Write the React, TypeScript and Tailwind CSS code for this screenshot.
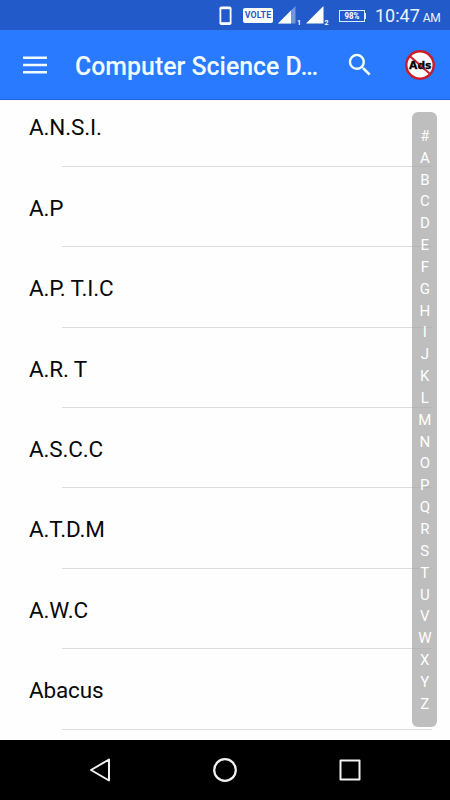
const terms = ['A.N.S.I.', 'A.P', 'A.P. T.I.C', 'A.R. T', 'A.S.C.C', 'A.T.D.M', 'A.W.C', 'Abacus'];
const letters = '#ABCDEFGHIJKLMNOPQRSTUVWXYZ'.split('');

function StatusBar() {
  return (
    <div className="flex h-[30px] shrink-0 items-center bg-[#225bc9] pl-[219px] pt-px text-white">
      <svg width="13" height="20" viewBox="0 0 13 20" className="shrink-0">
        <rect x="0.5" y="0.5" width="12" height="18.5" rx="1.8" fill="#fff" />
        <rect x="2.3" y="3.2" width="8.4" height="13" fill="#225bc9" />
      </svg>
      <div className="ml-[11px] flex h-[15px] w-[30px] shrink-0 items-center justify-center rounded-[2px] bg-white text-[8.8px] font-bold leading-none tracking-[0.1px] text-[#225bc9]">
        VOLTE
      </div>
      <svg width="54" height="22" viewBox="0 0 54 22" className="ml-[4px] shrink-0">
        <path d="M18.5 1V18.5H1Z" fill="#7197df" />
        <path d="M14 5.5V18.5H1Z" fill="#fff" />
        <text x="20" y="19.5" fontSize="7" fontWeight="700" fill="#fff">1</text>
        <path d="M46.5 1V18.5H29Z" fill="#fff" />
        <text x="47.5" y="19.5" fontSize="7" fontWeight="700" fill="#fff">2</text>
      </svg>
      <div className="ml-[8px] flex h-[12px] w-[26px] shrink-0 items-center justify-center border border-[#dce9ff]">
        <svg width="22" height="10" viewBox="0 0 22 10">
          <text x="11" y="8.2" textAnchor="middle" textLength="15" lengthAdjust="spacingAndGlyphs" fontSize="8.8" fontWeight="700" fill="#fff">98%</text>
        </svg>
      </div>
      <div className="h-[6px] w-px shrink-0 bg-[#dce9ff]" />
      <div className="ml-[9px] mt-px flex shrink-0 items-baseline gap-[3px] whitespace-nowrap text-[#e8f3ff]">
        <span className="text-[18px] leading-[22px]">10:47</span>
        <span className="text-[12px] leading-none tracking-[-0.3px]">AM</span>
      </div>
    </div>
  );
}

function Header() {
  return (
    <header className="flex h-[70px] shrink-0 items-center border-b border-[#2063d8] bg-[#297aff] text-white">
      <svg width="24" height="18" viewBox="0 0 24 18" className="ml-[23px] shrink-0">
        <path d="M0 1.8H24M0 9H24M0 16.2H24" stroke="#f0fcff" strokeWidth="2.4" />
      </svg>
      <h1 className="ml-[28px] mt-[4px] w-[260px] shrink-0 whitespace-nowrap text-[24.9px] font-medium leading-[32px] text-[#f0fcff]">
        Computer Science D…
      </h1>
      <svg width="30" height="30" viewBox="0 0 24 24" className="ml-[10px] shrink-0" fill="#f0fcff">
        <path d="M15.5 14h-.79l-.28-.27A6.471 6.471 0 0 0 16 9.5 6.5 6.5 0 1 0 9.5 16c1.61 0 3.09-.59 4.23-1.57l.27.28v.79l5 4.99L20.49 19l-4.99-5zm-6 0C7.01 14 5 11.99 5 9.5S7.01 5 9.5 5 14 7.01 14 9.5 11.99 14 9.5 14z" />
      </svg>
      <svg width="32" height="32" viewBox="0 0 32 32" className="ml-[29px] shrink-0">
        <circle cx="16" cy="16" r="13.7" fill="#fff" stroke="#c91c2c" strokeWidth="2.4" />
        <path d="M6.3 7.4L25.5 24.6" stroke="#c91c2c" strokeWidth="2" />
        <text x="16.3" y="20" textAnchor="middle" textLength="22.5" lengthAdjust="spacingAndGlyphs" fontSize="11" fontWeight="700" fill="#000" stroke="#000" strokeWidth="0.3" fontFamily="'DejaVu Sans', sans-serif">Ads</text>
        <path d="M11 11.6L21 20.6" stroke="#c91c2c" strokeWidth="1" />
      </svg>
    </header>
  );
}

function TermList() {
  return (
    <main className="relative h-[640px] shrink-0 overflow-hidden bg-[#fefefe]">
      <ul className="-mt-[13.5px]">
        {terms.map((term) => (
          <li key={term} className="flex h-[80.4px] flex-col">
            <div className="flex flex-1 items-center pl-[29px] pt-[2.6px] text-[22.5px] leading-[28px] tracking-[-0.15px] text-[#080808]">{term}</div>
            <div className="ml-[62px] mr-[18px] h-px shrink-0 bg-[#dcdcdc]" />
          </li>
        ))}
      </ul>
      <nav className="absolute right-[12.6px] top-[12.4px] flex h-[614.8px] w-[25.2px] flex-col items-center rounded-[6px] bg-[#a8a8a8]/75 pt-[13px]">
        {letters.map((letter) => (
          <span key={letter} className="flex h-[21.85px] shrink-0 items-center text-[15px] leading-none text-white">{letter}</span>
        ))}
      </nav>
    </main>
  );
}

function NavigationBar() {
  return (
    <footer className="flex h-[60px] shrink-0 items-center gap-[97px] bg-black pl-[86px]">
      <svg width="28" height="28" viewBox="0 0 28 28" fill="none" stroke="#f1f1f1" strokeWidth="2" strokeLinejoin="round">
        <path d="M23 3.5V24.5L5 14Z" />
      </svg>
      <svg width="28" height="28" viewBox="0 0 28 28" fill="none" stroke="#f1f1f1" strokeWidth="2.2">
        <circle cx="14" cy="14" r="10.8" />
      </svg>
      <svg width="28" height="28" viewBox="0 0 28 28" fill="none" stroke="#f1f1f1" strokeWidth="2" strokeLinejoin="round">
        <rect x="4.5" y="4.5" width="19" height="19" />
      </svg>
    </footer>
  );
}

export default function App() {
  return (
    <div className="flex h-[800px] w-[450px] flex-col overflow-hidden bg-white font-[Roboto,sans-serif]">
      <StatusBar />
      <Header />
      <TermList />
      <NavigationBar />
    </div>
  );
}
